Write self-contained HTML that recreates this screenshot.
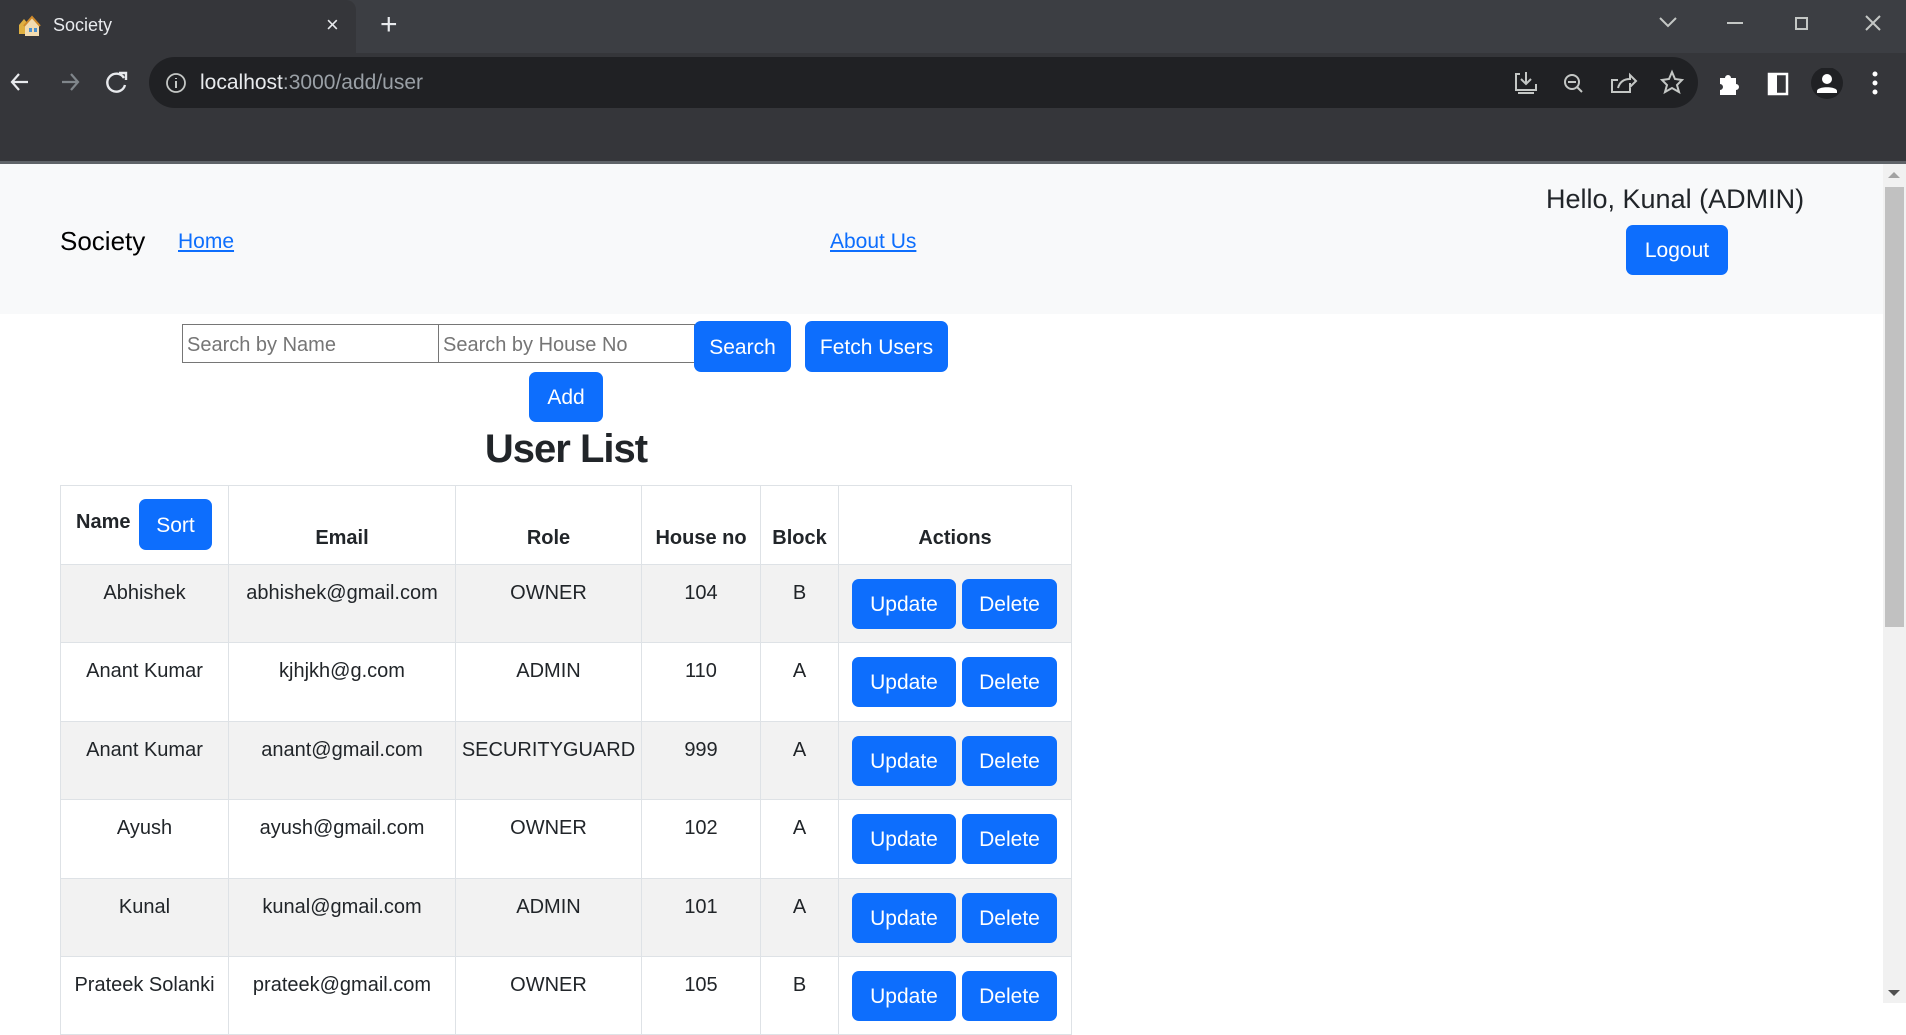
<!DOCTYPE html>
<html><head><meta charset="utf-8"><style>
*{box-sizing:border-box;margin:0;padding:0}
body{width:1906px;height:1003px;overflow:hidden;background:#fff;font-family:"Liberation Sans",sans-serif;position:relative;color:#212529}
.a{position:absolute}
.btn{position:absolute;background:#0d6efd;color:#fff;border-radius:7px;font-size:21px;display:flex;align-items:center;justify-content:center;padding-top:2px}
table{position:absolute;left:60px;top:485px;border-collapse:collapse;table-layout:fixed;font-size:20px}
td,th{border:1px solid #dee2e6;text-align:center;vertical-align:top;position:relative}
th{height:79px;font-weight:bold;padding-top:41px}
td{height:78.4px;padding-top:17px}
tr.s td{background:#f2f2f2}
td .u,td .d{position:absolute;top:14px;height:50px;background:#0d6efd;color:#fff;border-radius:7px;font-size:21px;display:flex;align-items:center;justify-content:center;padding-top:2px}
td .u{left:13px;width:104px}
td .d{left:123px;width:95px}
.ic{stroke:#c4c7c5;fill:none;stroke-width:2}
</style></head><body>
<!-- chrome -->
<div class="a" style="left:0;top:0;width:1906px;height:53px;background:#3c3e43"></div>
<div class="a" style="left:0;top:0;width:356px;height:53px;background:#35363a;border-radius:0 10px 0 0"></div>
<svg class="a" style="left:17px;top:15px" width="24" height="22"><path d="M2 10l5-6 5 6v9H2z" fill="#e0b040"/><path d="M8 11l7-8 7 8v10H8z" fill="#f3dcb0"/><path d="M7 11l8-9 8 9" stroke="#d08a2a" stroke-width="2" fill="none"/><rect x="12" y="13" width="3" height="4" fill="#4a90d0"/><rect x="17" y="13" width="3" height="4" fill="#4a90d0"/></svg>
<div class="a" style="left:53px;top:15px;font-size:18px;color:#e8eaed">Society</div>
<div class="a" style="left:326px;top:12px;font-size:22px;color:#e8eaed">×</div>
<div class="a" style="left:380px;top:8px;font-size:30px;color:#e8eaed">+</div>
<svg class="a" style="left:1650px;top:8px" width="240" height="30"><path d="M10 10l8 8 8-8" class="ic" stroke-width="1.3"/><path d="M77 15h16" class="ic" stroke-width="1.3"/><rect x="146" y="10" width="11" height="11" class="ic" stroke-width="1.3"/><path d="M216 8l14 14M230 8l-14 14" class="ic" stroke-width="1.3"/></svg>
<div class="a" style="left:0;top:53px;width:1906px;height:109px;background:#35363a"></div>
<div class="a" style="left:0;top:161px;width:1906px;height:3px;background:#5f6368"></div>
<div class="a" style="left:149px;top:57px;width:1549px;height:51px;background:#202124;border-radius:26px"></div>
<svg class="a" style="left:8px;top:68px" width="120" height="30"><path d="M20 14H4M11 6l-7 8 7 8" stroke="#e8eaed" stroke-width="2.2" fill="none"/><path d="M54 14h16M63 6l7 8-7 8" stroke="#80868b" stroke-width="2.2" fill="none"/><path d="M116 10a9 9 0 1 0 1 7" stroke="#e8eaed" stroke-width="2.4" fill="none"/><path d="M111 5h7v7" stroke="#e8eaed" stroke-width="2.4" fill="none"/></svg>
<svg class="a" style="left:165px;top:72px" width="22" height="22"><circle cx="11" cy="11" r="9" stroke="#c4c7c5" stroke-width="1.8" fill="none"/><path d="M11 9v7M11 6v1" stroke="#c4c7c5" stroke-width="2"/></svg>
<div class="a" style="left:200px;top:71px;font-size:21px;color:#9aa0a6"><span style="color:#e8eaed">localhost</span>:3000/add/user</div>
<svg class="a" style="left:1512px;top:68px;width:180px;height:32px"><path d="M8 6H4v16h20v-6M14 4v11M9 11l5 5 5-5M6 25h16" class="ic"/><circle cx="60" cy="14" r="7" class="ic"/><path d="M65 19l5 5M56 14h8" class="ic"/><path d="M106 12h-6v12h18v-4M106 20c2-7 7-9 12-9V7l6 6-6 6v-4" class="ic"/><path d="M160 4l3 7 7 1-5 5 2 7-7-4-7 4 2-7-5-5 7-1z" class="ic"/></svg>
<svg class="a" style="left:1717px;top:68px;width:170px;height:34px"><path d="M3 10h5a3 3 0 0 1 6 0h5v6a3 3 0 0 1 0 6v5H3v-5a3 3 0 0 0 0-6z" fill="#fff"/><rect x="52" y="6" width="18" height="20" stroke="#fff" stroke-width="2.5" fill="none"/><rect x="52" y="6" width="8" height="20" fill="#fff"/><circle cx="110" cy="15" r="16" fill="#202124"/><circle cx="110" cy="11" r="5" fill="#fff"/><path d="M100 23c0-5 20-5 20 0v2h-20z" fill="#fff"/><circle cx="158" cy="6" r="2.5" fill="#fff"/><circle cx="158" cy="15" r="2.5" fill="#fff"/><circle cx="158" cy="24" r="2.5" fill="#fff"/></svg>
<!-- navbar -->
<div class="a" style="left:0;top:164px;width:1883px;height:150px;background:#f8f9fa"></div>
<div class="a" style="left:60px;top:226px;font-size:26px;color:#000">Society</div>
<div class="a" style="left:178px;top:230px;font-size:21px;color:#0d6efd;text-decoration:underline">Home</div>
<div class="a" style="left:830px;top:230px;font-size:21px;color:#0d6efd;text-decoration:underline">About Us</div>
<div class="a" style="left:1546px;top:184px;font-size:27px;color:#212529">Hello, Kunal (ADMIN)</div>
<div class="btn" style="left:1626px;top:225px;width:102px;height:50px">Logout</div>
<!-- scrollbar -->
<div class="a" style="left:1883px;top:164px;width:23px;height:839px;background:#f1f1f1"></div>
<div class="a" style="left:1885px;top:187px;width:19px;height:440px;background:#c1c1c1"></div>
<div class="a" style="left:1888px;top:172px;width:0;height:0;border:6px solid transparent;border-bottom:6px solid #a3a3a3;border-top:0"></div>
<div class="a" style="left:1888px;top:990px;width:0;height:0;border:6px solid transparent;border-top:6px solid #505050;border-bottom:0"></div>
<!-- search -->
<div class="a" style="left:182px;top:324px;width:257px;height:39px;border:1px solid #767676;font-size:20px;color:#757575;padding:9px 4px 0">Search by Name</div>
<div class="a" style="left:438px;top:324px;width:257px;height:39px;border:1px solid #767676;font-size:20px;color:#757575;padding:9px 4px 0">Search by House No</div>
<div class="btn" style="left:694px;top:321px;width:97px;height:51px">Search</div>
<div class="btn" style="left:805px;top:321px;width:143px;height:51px">Fetch Users</div>
<div class="btn" style="left:529px;top:372px;width:74px;height:50px">Add</div>
<div class="a" style="left:466px;top:427px;width:200px;text-align:center;font-size:40px;font-weight:bold;color:#212529;letter-spacing:-1px">User List</div>
<table>
<colgroup><col style="width:168px"><col style="width:227px"><col style="width:186px"><col style="width:119px"><col style="width:78px"><col style="width:233px"></colgroup>
<tr><th style="padding-top:25px;text-align:left;padding-left:15px">Name<span style="position:absolute;left:78px;top:13px;width:73px;height:51px;background:#0d6efd;color:#fff;border-radius:7px;font-weight:normal;font-size:21px;display:flex;align-items:center;justify-content:center;padding-top:2px">Sort</span></th><th>Email</th><th>Role</th><th>House no</th><th>Block</th><th>Actions</th></tr>
<tr class="s"><td>Abhishek</td><td>abhishek@gmail.com</td><td>OWNER</td><td>104</td><td>B</td><td><span class="u">Update</span><span class="d">Delete</span></td></tr>
<tr><td>Anant Kumar</td><td>kjhjkh@g.com</td><td>ADMIN</td><td>110</td><td>A</td><td><span class="u">Update</span><span class="d">Delete</span></td></tr>
<tr class="s"><td>Anant Kumar</td><td>anant@gmail.com</td><td>SECURITYGUARD</td><td>999</td><td>A</td><td><span class="u">Update</span><span class="d">Delete</span></td></tr>
<tr><td>Ayush</td><td>ayush@gmail.com</td><td>OWNER</td><td>102</td><td>A</td><td><span class="u">Update</span><span class="d">Delete</span></td></tr>
<tr class="s"><td>Kunal</td><td>kunal@gmail.com</td><td>ADMIN</td><td>101</td><td>A</td><td><span class="u">Update</span><span class="d">Delete</span></td></tr>
<tr><td>Prateek Solanki</td><td>prateek@gmail.com</td><td>OWNER</td><td>105</td><td>B</td><td><span class="u">Update</span><span class="d">Delete</span></td></tr>
</table>
</body></html>
